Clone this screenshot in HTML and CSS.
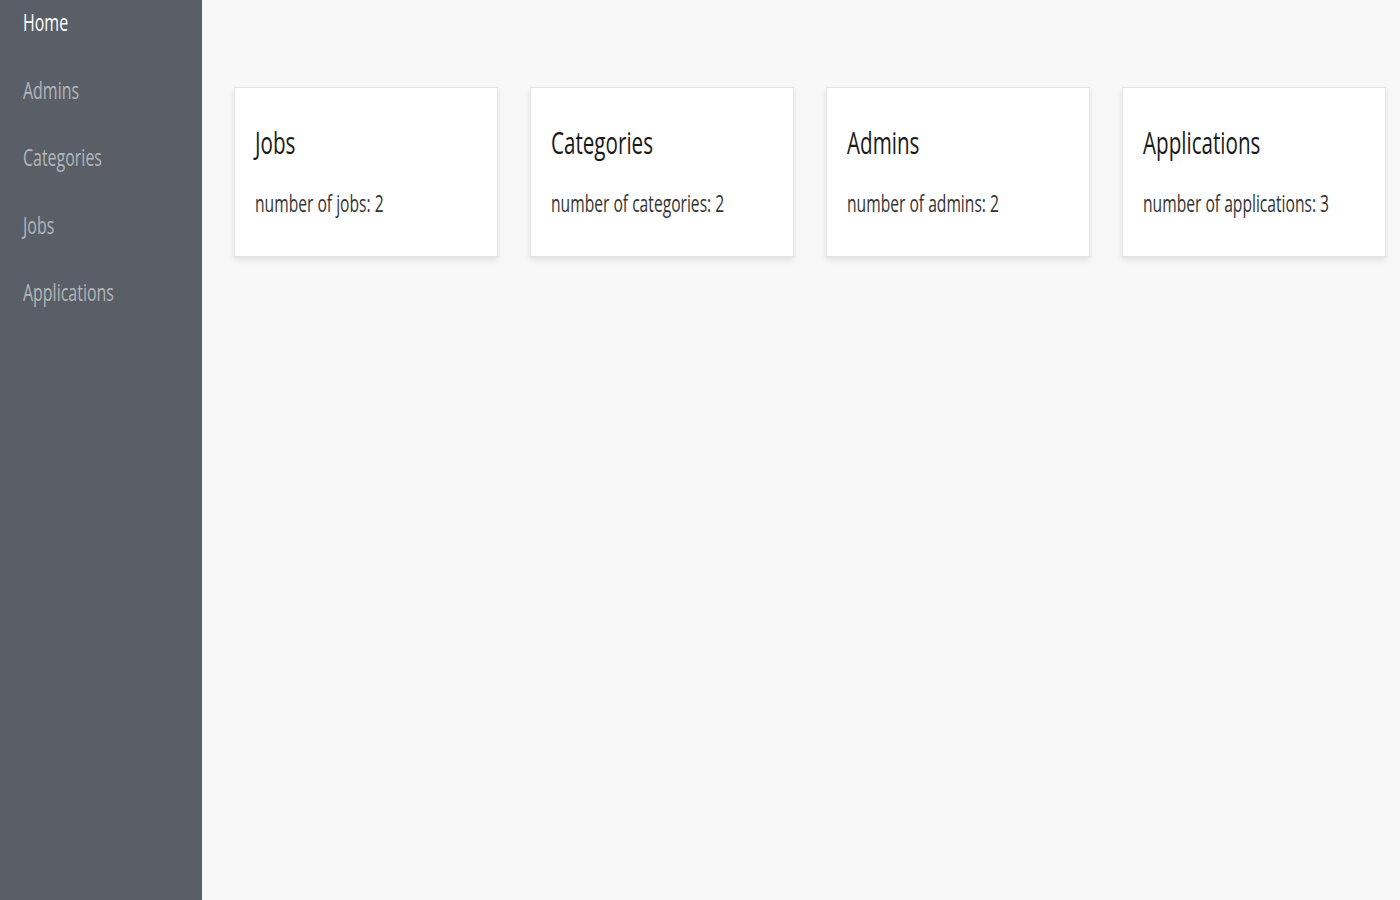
FILE: index.html
```html
<!DOCTYPE html>
<html>
<head>
<meta charset="utf-8">
<link rel="stylesheet" href="styles.css">
</head>
<body>
<div class="layout">
  <nav class="sidebar">
    <a class="nav-link active" href="#"><span class="sq">Home</span></a>
    <a class="nav-link" href="#"><span class="sq">Admins</span></a>
    <a class="nav-link" href="#"><span class="sq">Categories</span></a>
    <a class="nav-link" href="#"><span class="sq">Jobs</span></a>
    <a class="nav-link" href="#"><span class="sq">Applications</span></a>
  </nav>
  <main class="content">
    <div class="cards">
      <div class="card">
        <h2 class="card-title"><span class="sq">Jobs</span></h2>
        <p class="card-text"><span class="sq">number of jobs: 2</span></p>
      </div>
      <div class="card">
        <h2 class="card-title"><span class="sq">Categories</span></h2>
        <p class="card-text"><span class="sq">number of categories: 2</span></p>
      </div>
      <div class="card">
        <h2 class="card-title"><span class="sq">Admins</span></h2>
        <p class="card-text"><span class="sq">number of admins: 2</span></p>
      </div>
      <div class="card">
        <h2 class="card-title"><span class="sq">Applications</span></h2>
        <p class="card-text"><span class="sq">number of applications: 3</span></p>
      </div>
    </div>
  </main>
</div>
</body>
</html>
```

FILE: styles.css
```css
html, body {
  margin: 0;
  padding: 0;
  height: 100%;
}
body {
  font-family: "Open Sans", "Noto Sans", sans-serif;
  background: #f8f8f8;
}
.layout {
  display: flex;
  height: 900px;
}
.sq {
  display: inline-block;
  transform: scaleX(0.665);
  transform-origin: left center;
  white-space: nowrap;
}
.sidebar {
  width: 202px;
  flex: none;
  background: #5a5f67;
  display: flex;
  flex-direction: column;
  gap: 35.5px;
  padding: 6px 0 0 23px;
  box-sizing: border-box;
}
.nav-link {
  display: block;
  font-size: 24px;
  line-height: 32px;
  color: #b3b6ba;
  text-decoration: none;
}
.nav-link.active {
  color: #ffffff;
}
.content {
  flex: 1;
  padding: 87px 15px 0 32px;
}
.cards {
  display: flex;
  gap: 32px;
}
.card {
  width: 264px;
  height: 170px;
  box-sizing: border-box;
  background: #fff;
  border: 1px solid #e4e4e4;
  box-shadow: 0 3px 6px rgba(0, 0, 0, 0.1);
  padding: 33px 20px 0 20px;
  overflow: hidden;
}
.card-title {
  margin: 0 0 24px;
  font-size: 31px;
  font-weight: 400;
  line-height: normal;
  color: #1a1a1a;
}
.card-text {
  margin: 0;
  font-size: 23.5px;
  line-height: normal;
  color: #333;
}
```
